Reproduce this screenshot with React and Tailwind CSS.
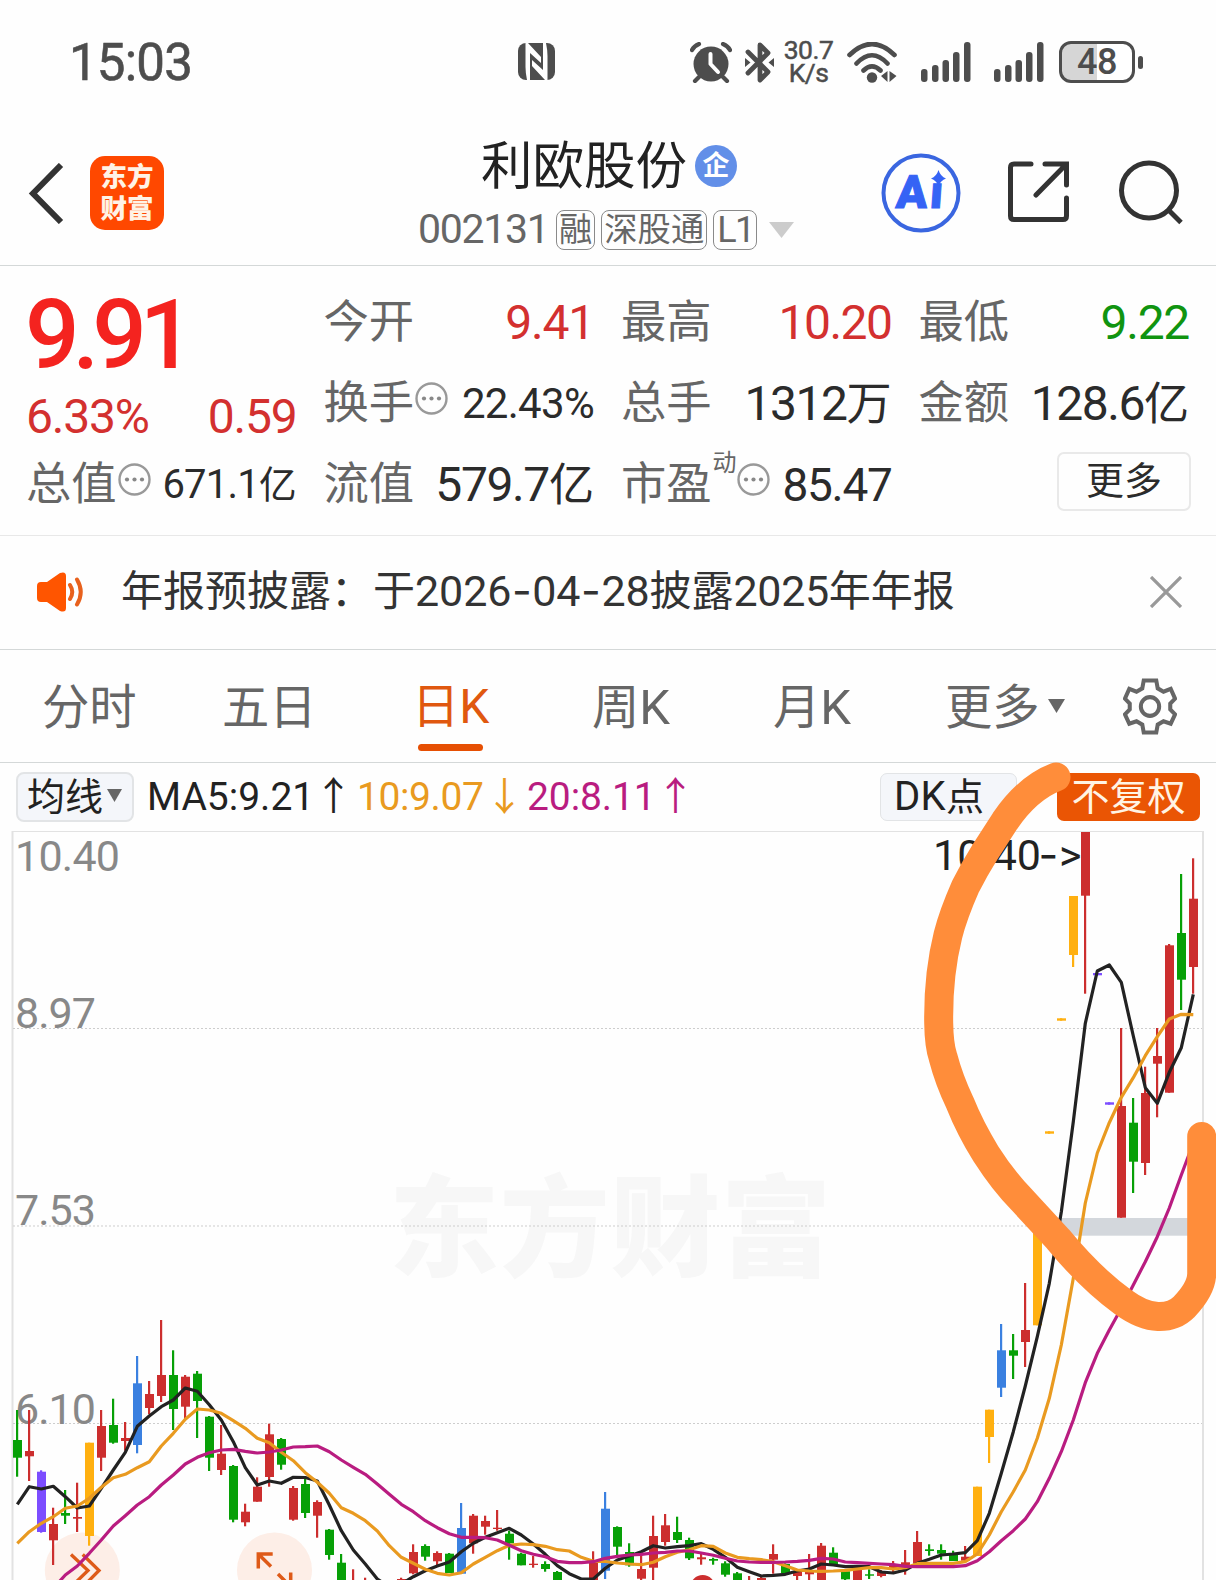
import React from 'react';
import clsx from 'clsx';

const RED = '#cc2e2e';
const GREEN = '#07a007';
const YELLOW = '#ffb010';
const BLUE = '#3a80e0';
const PURPLE = '#7c4dff';

// slot, color, high, body top, body bottom, low (screen pixels)
const CANDLES = [
    [0, GREEN, 1410, 1440, 1457.7, 1476.7],
    [1, RED, 1410, 1451, 1456.3, 1481],
    [2, PURPLE, 1470.3, 1471.7, 1532, 1532.7],
    [3, RED, 1507.7, 1524, 1540.3, 1565],
    [4, GREEN, 1490, 1513, 1515.7, 1524],
    [5, RED, 1482.7, 1517, 1518.7, 1532],
    [6, YELLOW, 1442.7, 1442.7, 1536, 1545.7],
    [7, RED, 1410, 1426, 1457.7, 1471],
    [8, GREEN, 1398.7, 1425, 1442.7, 1443.7],
    [9, RED, 1422, 1438, 1441, 1450.7],
    [10, BLUE, 1356, 1383.3, 1445, 1453.3],
    [11, RED, 1381, 1394, 1408, 1414.3],
    [12, RED, 1320, 1375, 1396, 1402],
    [13, GREEN, 1350.3, 1375, 1409, 1430],
    [14, RED, 1375, 1376.7, 1406.7, 1419.3],
    [15, GREEN, 1371, 1373.7, 1401, 1438],
    [16, GREEN, 1416, 1416.7, 1457.7, 1471],
    [17, RED, 1425, 1453.7, 1470, 1475],
    [18, GREEN, 1465, 1466, 1519.7, 1522.3],
    [19, RED, 1503.7, 1511.7, 1522.3, 1526.3],
    [20, RED, 1477.3, 1486.7, 1501.7, 1501.7],
    [21, RED, 1423.7, 1434.3, 1477, 1486.7],
    [22, GREEN, 1438, 1439, 1464.7, 1469.7],
    [23, RED, 1486, 1488, 1519.7, 1520.7],
    [24, GREEN, 1478, 1484, 1513, 1518],
    [25, RED, 1500.3, 1502, 1515.7, 1537.7],
    [26, GREEN, 1529, 1529.7, 1555, 1559.7],
    [27, GREEN, 1554, 1562.7, 1590, 1590],
    [28, RED, 1569.3, 1580, 1590, 1590],
    [29, RED, 1577.7, 1584, 1590, 1590],
    [32, RED, 1577.7, 1579, 1600, 1600],
    [33, RED, 1544.3, 1552, 1573.3, 1574.3],
    [34, GREEN, 1544.3, 1546, 1556.7, 1560.7],
    [35, RED, 1551.3, 1553, 1561.3, 1565.3],
    [36, GREEN, 1553, 1553.7, 1573, 1573],
    [37, BLUE, 1503, 1528, 1573.7, 1573.7],
    [38, RED, 1514, 1515.7, 1543.3, 1553.7],
    [39, RED, 1515.7, 1521, 1526.7, 1534.7],
    [40, RED, 1510, 1527.7, 1529, 1530.7],
    [41, GREEN, 1530.7, 1533.7, 1543.3, 1559.7],
    [42, GREEN, 1552.7, 1553.7, 1565.3, 1565.3],
    [43, RED, 1556, 1563.7, 1565, 1567.7],
    [44, GREEN, 1561.3, 1564, 1569, 1571.7],
    [45, GREEN, 1571, 1572, 1590, 1590],
    [48, RED, 1551.3, 1561.7, 1590, 1590],
    [49, BLUE, 1492, 1508.7, 1570.7, 1579],
    [50, GREEN, 1526.3, 1527, 1546.7, 1555],
    [51, GREEN, 1543.3, 1552, 1565.3, 1566.7],
    [52, RED, 1555, 1569, 1578.7, 1580],
    [53, RED, 1515.7, 1536, 1567.7, 1580],
    [54, RED, 1514, 1525.3, 1542, 1545.7],
    [55, GREEN, 1516.7, 1532, 1540, 1543],
    [56, GREEN, 1537.7, 1540, 1558.3, 1560],
    [57, RED, 1554, 1557.3, 1559.3, 1564.7],
    [58, GREEN, 1557.7, 1559, 1560.7, 1564.7],
    [59, GREEN, 1561.3, 1563.3, 1574.7, 1576.7],
    [60, GREEN, 1572, 1573.3, 1590, 1590],
    [61, RED, 1576, 1583, 1590, 1590],
    [62, RED, 1577, 1578, 1590, 1590],
    [63, RED, 1544.3, 1554, 1559.7, 1573.7],
    [64, GREEN, 1563.3, 1564, 1573, 1573],
    [65, RED, 1570, 1571.7, 1576, 1580],
    [66, RED, 1554, 1570.7, 1574.3, 1580],
    [67, RED, 1543, 1545.7, 1590, 1590],
    [68, GREEN, 1547.3, 1552.7, 1564, 1564],
    [69, GREEN, 1571, 1571.3, 1579.3, 1580],
    [70, RED, 1570, 1570, 1590, 1590],
    [71, GREEN, 1569.3, 1574.3, 1575.7, 1579],
    [72, RED, 1570, 1571.7, 1576, 1577.3],
    [73, RED, 1561, 1566, 1569, 1573],
    [74, RED, 1550, 1562.3, 1568.3, 1574.7],
    [75, RED, 1531, 1542, 1563.3, 1563.3],
    [76, GREEN, 1544.3, 1549.3, 1551, 1555.7],
    [77, GREEN, 1544.3, 1550, 1553.7, 1559.7],
    [78, GREEN, 1550.7, 1554.3, 1561, 1561],
    [79, RED, 1546, 1556.7, 1560.7, 1562],
    [80, YELLOW, 1486.7, 1486.7, 1556, 1556],
    [81, YELLOW, 1409.7, 1409.7, 1437, 1463],
    [82, BLUE, 1324, 1350.3, 1387.7, 1397],
    [83, GREEN, 1334, 1350.3, 1355.7, 1379],
    [84, RED, 1283, 1330, 1342, 1367],
    [85, YELLOW, 1226, 1226, 1325.3, 1325.3],
    [86, YELLOW, 1131.3, 1131.3, 1133.7, 1133.7],
    [87, YELLOW, 1018.3, 1018.3, 1020.7, 1020.7],
    [88, YELLOW, 896, 896, 955, 967],
    [89, RED, 832, 832, 895.7, 993.7],
    [90, PURPLE, 973, 973, 975.3, 975.3],
    [91, PURPLE, 1102.3, 1102.3, 1104.7, 1104.7],
    [92, RED, 1028, 1106, 1217.7, 1217.7],
    [93, GREEN, 1098, 1122.7, 1161.7, 1193],
    [94, RED, 1066.7, 1093, 1163, 1175],
    [95, RED, 1028, 1056, 1063.7, 1117.3],
    [96, RED, 944, 945.3, 1092.7, 1092.7],
    [97, GREEN, 874, 933, 979.7, 1010],
    [98, RED, 858.3, 898.7, 967, 993.7],
];

// one y per slot, starting at slot 0
const MA5 = [
    1504.3, 1486.7, 1489, 1486.3, 1496.7, 1508, 1506, 1488.3, 1470, 1452.3, 1426.3, 1416, 1406.7, 1400, 1388, 1391.3,
    1404.7, 1420, 1441.7, 1467.7, 1485, 1481, 1483.3, 1477.3, 1477.5, 1481, 1505, 1530.7, 1550, 1564, 1579, 1587,
    1584, 1576.7, 1570.7, 1566, 1562, 1551.7, 1543.3, 1537.3, 1532.7, 1528.3, 1535, 1544, 1554.3, 1565.7, 1573.7, 1579,
    1579, 1568.3, 1560, 1556, 1551.7, 1545.7, 1548, 1546.7, 1545.7, 1543.7, 1549.3, 1557.3, 1567.3, 1571.7, 1576, 1575.3,
    1574.3, 1571, 1569, 1564, 1565, 1566.7, 1566.3, 1566.7, 1572, 1573, 1570, 1563.3, 1559.3, 1555, 1554, 1552.7,
    1540.7, 1513.3, 1473.3, 1431.7, 1386, 1336.7, 1283.3, 1212, 1121.7, 1023.3, 971, 965, 982.3, 1036, 1087.7, 1103.3,
    1072.3, 1047.7, 994.3,
];

const MA10 = [
    1543.3, 1531.7, 1523.3, 1516.7, 1508.3, 1506, 1498.3, 1487.3, 1477.7, 1474.3, 1467.7, 1461.7, 1446, 1433.3, 1419.3, 1409,
    1410, 1413.3, 1420.7, 1428.3, 1438.3, 1442.7, 1452.3, 1460.7, 1472.7, 1482.3, 1493.3, 1507.7, 1513.3, 1520.7, 1531, 1545.7,
    1557.3, 1563.3, 1569.3, 1573.3, 1575, 1572.7, 1564, 1557.3, 1550.7, 1545.3, 1544, 1544.7, 1546.3, 1549.7, 1551, 1557.3,
    1561.3, 1561.5, 1563, 1564, 1564.7, 1562.3, 1556.7, 1552.3, 1549.7, 1545.7, 1546.3, 1553, 1557.3, 1558.7, 1559.7, 1561.7,
    1565.7, 1570, 1571, 1571.3, 1571, 1570.3, 1569, 1567.7, 1567.7, 1569, 1567.7, 1563.7, 1563.3, 1563.3, 1563.3, 1561.7,
    1554, 1535, 1511.7, 1491.7, 1470, 1438.3, 1398.3, 1345, 1278.3, 1203, 1153, 1122.7, 1097.3, 1077.7, 1055.7, 1036.7,
    1019, 1014.3, 1014.7,
];

const MA20 = [
    1636, 1621, 1604, 1588.3, 1575, 1566, 1553.3, 1540, 1526, 1515.7, 1505, 1496.7, 1485, 1475, 1464, 1457.3,
    1452.7, 1450, 1449.3, 1451.3, 1453, 1452, 1450, 1447, 1446.7, 1446, 1451.7, 1460, 1467.3, 1474.3, 1484, 1494.3,
    1504.3, 1511.7, 1520.7, 1527.7, 1533.7, 1537.3, 1537.3, 1537.7, 1540, 1545.3, 1550.7, 1554.3, 1556.7, 1561.3, 1562.7, 1562.7,
    1561.7, 1558.3, 1556.3, 1555, 1554.3, 1553, 1552.3, 1551, 1551, 1553, 1555.3, 1558.3, 1561, 1562, 1562.3, 1562.3,
    1562, 1561.3, 1560.3, 1558.3, 1559, 1562, 1562.7, 1563.3, 1564, 1564.7, 1566.3, 1566.7, 1566.7, 1566.7, 1566.7, 1565.7,
    1560.7, 1551.7, 1540.7, 1530.7, 1519, 1501.7, 1478.3, 1451.7, 1420, 1382.7, 1353.3, 1330, 1308.3, 1285, 1261.7, 1236.7,
    1208, 1175, 1143,
];

const slotX = (i) => 17.3 + i * 12;
const toPoints = (values) => values.map((y, i) => `${slotX(i)},${y}`).join(' ');

const AXIS = [
    { label: '10.40', y: 871, width: 105 },
    { label: '8.97', y: 1028, width: 81 },
    { label: '7.53', y: 1225, width: 81 },
    { label: '6.10', y: 1424, width: 81 },
];

const Signal = ({ className }) => (
    <svg className={className} width="50" height="40" viewBox="0 0 50 40" fill="#4d4d4d">
        <rect x="0" y="27" width="6.5" height="13" rx="3" />
        <rect x="11" y="23" width="6.5" height="17" rx="3" />
        <rect x="21.5" y="18" width="6.5" height="22" rx="3" />
        <rect x="32" y="10" width="6.5" height="30" rx="3" />
        <rect x="43" y="0" width="6.5" height="40" rx="3" />
    </svg>
);

const StatusBar = () => (
    <div className="h-[124px] flex items-center text-[#4d4d4d]">
        <span className="ml-[69px] w-[449px] text-[51px] leading-none tracking-[-0.8px] font-normal [-webkit-text-stroke:0.6px_#4d4d4d]">15:03</span>
        <svg className="-mt-[2px]" width="37" height="37" viewBox="0 0 37 37">
            <rect width="37" height="37" rx="8" fill="#4d4d4d" />
            <path d="M7.500 0 H10 L23 14 V20 L12 10 V37 H9 Q7.500 30 7.500 24 Z M29.500 37 H27 L14 23 V17 L25 27 V0 H28 Q29.500 7 29.500 13 Z" fill="#fff" />
        </svg>
        <svg className="ml-[135px]" width="42" height="41" viewBox="0 0 42 41">
            <circle cx="21" cy="22" r="17.5" fill="#4d4d4d" />
            <path d="M2 8 Q4 4 9 2 M33 2 Q38 4 40 8 M9 35 L5 39 M33 35 L37 39" fill="none" stroke="#4d4d4d" strokeWidth="4.2" strokeLinecap="round" />
            <path d="M20.5 12 V22 L28 30" fill="none" stroke="#fff" strokeWidth="4" strokeLinecap="round" strokeLinejoin="round" />
        </svg>
        <svg className="ml-[13px]" width="29" height="41" viewBox="0 0 29 41">
            <path d="M3 10 L23 30 L15 38 V3 L23 11 L3 31" fill="none" stroke="#4d4d4d" strokeWidth="4.8" strokeLinejoin="round" strokeLinecap="round" />
            <path d="M0 16 L5.5 20.5 L0 25 Z M29 16 L23.5 20.5 L29 25 Z" fill="#4d4d4d" />
        </svg>
        <div className="ml-[6px] -mt-[2px] w-[57px] text-center text-[26.5px] leading-[23.5px] tracking-[-0.5px] [-webkit-text-stroke:0.5px_#4d4d4d]">
            <div>30.7</div>
            <div>K/s</div>
        </div>
        <svg className="ml-[10px]" width="50" height="41" viewBox="0 0 50 41">
            <path d="M2.5 13 Q25 -9 47.5 13 M9.5 21.500 Q25 5 40.500 21.500 M16.500 28.500 Q25 20 33.500 28.500" fill="none" stroke="#4d4d4d" strokeWidth="4.6" strokeLinecap="round" />
            <circle cx="25" cy="35.500" r="5.2" fill="#4d4d4d" />
            <path d="M40.500 29 V40 L34 34 Z M42.500 29 L49.500 34 L42.500 40 Z" fill="#4d4d4d" />
        </svg>
        <Signal className="ml-[24px]" />
        <Signal className="ml-[23px]" />
        <div className="ml-[15px] w-[76px] h-[42px] -mt-px rounded-[12px] border-[3.5px] border-[#4d4d4d] bg-linear-to-r from-[#d6d6d6] from-50% to-white to-50% flex items-center justify-center text-[36px] leading-none tracking-[-0.5px] font-medium">48</div>
        <div className="ml-[3px] w-[5px] h-[13px] rounded-full bg-[#4d4d4d]" />
    </div>
);

const Tag = ({ children }) => (
    <span className="h-[40px] px-[2px] border-[1.5px] border-[#8a8a8a] rounded-[8px] flex items-center text-[33.3px] leading-none whitespace-nowrap shrink-0">{children}</span>
);

const Header = () => (
    <div className="h-[142px] border-b border-[#d4d8d8] flex items-start">
        <svg className="ml-[28px] mt-[39px]" width="37" height="61" viewBox="0 0 37 61">
            <path d="M33 2 L5 30.5 L33 59" fill="none" stroke="#333" strokeWidth="6" />
        </svg>
        <div className="ml-[25px] mt-[32px] w-[74px] h-[74px] rounded-[15px] bg-[#ff4800] text-[#fff3e6] text-[26.5px] leading-[31.5px] font-black text-center pt-[5px]">
            <div>东方</div>
            <div>财富</div>
        </div>
        <div className="ml-[254px] w-[396px]">
            <div className="mt-[12px] h-[62px] ml-[63px] flex items-center">
                <span className="text-[51.5px] leading-none text-[#222]">利欧股份</span>
                <span className="ml-[8px] -mt-[2px] size-[42px] rounded-full bg-[#628fe8] text-white text-[27px] leading-none font-bold flex items-center justify-center">企</span>
            </div>
            <div className="mt-[11px] flex items-center text-[#666]">
                <span className="w-[138px] shrink-0 text-[41px] leading-none tracking-[-1.3px]">002131</span>
                <Tag>融</Tag>
                <span className="w-[6px] shrink-0" />
                <Tag>深股通</Tag>
                <span className="w-[6px] shrink-0" />
                <Tag><span className="pl-px text-[36px] tracking-[-1.5px]">L1</span></Tag>
                <svg className="ml-[12px] shrink-0" width="25" height="16" viewBox="0 0 25 16"><path d="M0 0 H25 L12.5 16 Z" fill="#ccc" /></svg>
            </div>
        </div>
        <svg className="ml-[67px] mt-[29px]" width="80" height="80" viewBox="0 0 80 80">
            <circle cx="40" cy="40" r="37.5" fill="none" stroke="#3a66e0" strokeWidth="4" />
            <g transform="skewX(-4)">
                <text y="55" fontSize="46" fontWeight="900" fill="#3563f5" stroke="#3563f5" strokeWidth="1"><tspan x="18">A</tspan><tspan x="52">i</tspan></text>
            </g>
            <rect x="49" y="16" width="15" height="14" fill="#fefefe" />
            <path d="M57.500 17 Q59.500 23.500 65 25.500 Q59.500 27.500 57.500 33 Q55.500 27.500 50 25.500 Q55.500 23.500 57.500 17 Z" fill="#3563f5" />
        </svg>
        <svg className="ml-[45px] mt-[36px]" width="64" height="64" viewBox="0 0 64 64">
            <path d="M25 4 H8 Q4.500 4 4.500 7.500 V56 Q4.500 59.500 8 59.500 H57 Q60.500 59.500 60.500 56 V38 M39 4 H60.500 V25 M60 4.500 L30 35" fill="none" stroke="#333" strokeWidth="5" strokeLinecap="round" />
        </svg>
        <svg className="ml-[48px] mt-[35px]" width="68" height="68" viewBox="0 0 68 68">
            <circle cx="31" cy="31.500" r="27.500" fill="none" stroke="#333" strokeWidth="5" />
            <path d="M50 50.500 L63 63.500" stroke="#333" strokeWidth="5" />
        </svg>
    </div>
);

const Dots = () => (
    <svg className="-mt-[10px] ml-px shrink-0" width="33" height="33" viewBox="0 0 33 33">
        <circle cx="16.5" cy="16.5" r="15" fill="none" stroke="#999" strokeWidth="2.4" />
        <g fill="#888">
            <circle cx="9" cy="16.5" r="2.1" />
            <circle cx="16.5" cy="16.5" r="2.1" />
            <circle cx="24" cy="16.5" r="2.1" />
        </g>
    </svg>
);

const Quote = ({ label, note, dots, value, unit, size = 'text-[48px]', color = 'text-[#2b2b2b]' }) => (
    <div className="h-[81px] pt-[6px] flex items-center">
        <span className="text-[45.3px] leading-none text-[#666] -ml-px">{label}</span>
        {note && <span className="-mt-[43px] ml-px -mr-px text-[24px] leading-none text-[#666]">{note}</span>}
        {dots && <Dots />}
        <span className={clsx('ml-auto flex items-baseline leading-none', size, color)}>
            {value}
            {unit && <span className="text-[0.94em] tracking-normal">{unit}</span>}
        </span>
    </div>
);

const QuotePanel = () => (
    <div className="h-[270px] border-b border-[#e8e8e8] px-[27px] pt-[13px] grid grid-cols-4 gap-x-[28px] content-start">
        <div>
            <div className="h-[108px] -ml-[2px] flex items-center text-[96px] leading-none font-medium tracking-[-7px] text-[#f4231f] pt-[3px]">9.91</div>
            <div className="h-[54px] -ml-px pt-[5px] flex items-center justify-between text-[48px] leading-none tracking-[-1.2px] text-[#d3302f]">
                <span>6.33%</span>
                <span>0.59</span>
            </div>
            <Quote label="总值" dots value="671.1" unit="亿" size="text-[40px] tracking-[-0.8px]" />
        </div>
        <div>
            <Quote label="今开" value="9.41" size="text-[48px] tracking-[-1.2px]" color="text-[#d3302f]" />
            <Quote label="换手" dots value="22.43%" size="text-[42px] tracking-[-0.7px]" />
            <Quote label="流值" value="579.7" unit="亿" size="text-[48px] tracking-[-1.4px]" />
        </div>
        <div>
            <Quote label="最高" value="10.20" size="text-[48px] tracking-[-1.5px]" color="text-[#d3302f]" />
            <Quote label="总手" value="1312" unit="万" size="text-[48px] tracking-[-1.5px]" />
            <Quote label="市盈" note="动" dots value="85.47" size="text-[46px] tracking-[-1.3px]" />
        </div>
        <div>
            <Quote label="最低" value="9.22" size="text-[48px] tracking-[-1.3px]" color="text-[#109410]" />
            <Quote label="金额" value="128.6" unit="亿" size="text-[48px] tracking-[-1.5px]" />
            <div className="h-[81px] flex items-center justify-end">
                <div className="w-[134px] h-[59px] -mr-[2px] pb-[2px] rounded-[7px] border-2 border-[#e9e9e9] flex items-center justify-center text-[38px] leading-none text-[#2b2b2b]">更多</div>
            </div>
        </div>
    </div>
);

// the UI face draws a wide hyphen
const Dash = () => <span className="inline-block w-[21px] text-center tracking-normal font-[Inter]">-</span>;

const Notice = () => (
    <div className="h-[114px] border-b border-[#d4d8d8] flex items-center text-[#333]">
        <svg className="ml-[37px] -mt-[2px]" width="48" height="40" viewBox="0 0 48 40">
            <path d="M4 10 H10 L23 1 Q29 -1 29 4 V36 Q29 41 23 39 L10 30 H4 Q0 30 0 26 V14 Q0 10 4 10 Z" fill="#ff5500" />
            <path d="M33 13 Q37.500 20 33 27 M40 7.500 Q47.500 20 40 32.500" fill="none" stroke="#e8611d" strokeWidth="4" strokeLinecap="round" />
        </svg>
        <div className="ml-[36px] -mt-[3px] flex items-baseline text-[42px] leading-none whitespace-nowrap">
            年报预披露：于
            <span className="text-[43px] tracking-[-0.1px]">2026<Dash />04<Dash />28</span>
            披露
            <span className="text-[43px] tracking-[-0.4px]">2025</span>
            年年报
        </div>
        <svg className="ml-auto mr-[34px] -mt-[2px]" width="32" height="32" viewBox="0 0 32 32">
            <path d="M1 1 L31 31 M31 1 L1 31" stroke="#999" strokeWidth="3.3" />
        </svg>
    </div>
);

const Tabs = () => (
    <div className="h-[113px] border-b border-[#d4d8d8] flex items-center text-[47.3px] leading-none text-[#666]">
        <span className="ml-[42px] pt-[5px] w-[180px]">分时</span>
        <span className="pt-[5px] w-[190px]">五日</span>
        <span className="relative pt-[3px] w-[180px] text-[#e0580f]">
            日<span className="text-[48px]">K</span>
            <span className="absolute left-[6px] top-[64px] w-[65px] h-[7px] rounded-full bg-[#e64f03]" />
        </span>
        <span className="pt-[3px] w-[181px]">周<span className="text-[49px]">K</span></span>
        <span className="pt-[3px] w-[172px]">月<span className="text-[49px]">K</span></span>
        <span className="pt-[5px]">更多</span>
        <svg className="ml-[8px]" width="17" height="14" viewBox="0 0 17 14"><path d="M0 0 H17 L8.500 14 Z" fill="#666" /></svg>
        <svg className="ml-[58px]" width="54" height="57" viewBox="0 0 56 58" preserveAspectRatio="none">
            <path d="M21.500 2.500 H34.500 L36 10.500 L42 14 L49.500 11 L54 21 L49 26 V32 L54 37 L49.500 46.500 L42 44 L36 47.500 L34.500 55.500 H21.500 L20 47.500 L14 44 L6.500 46.500 L2 37 L7 32 V26 L2 21 L6.500 11 L14 14 L20 10.500 Z" fill="none" stroke="#666" strokeWidth="4.2" />
            <circle cx="28" cy="29" r="9.500" fill="none" stroke="#666" strokeWidth="4.2" />
        </svg>
    </div>
);

const MaBar = () => (
    <div className="h-[68px] pt-[9px] flex items-start leading-none">
        <div className="ml-[16px] w-[118px] h-[50px] rounded-[8px] border-2 border-[#e2e4e6] bg-[#f4f6fa] flex items-center pl-[9px] text-[38px] text-[#222]">
            均线
            <svg className="ml-[4px] -mt-[3px]" width="15" height="13" viewBox="0 0 15 13"><path d="M0 0 H15 L7.500 13 Z" fill="#666" /></svg>
        </div>
        <div className="h-[50px] ml-[13px] flex items-center text-[39px]">
            <span className="w-[167px] text-[#222]">MA5:9.21</span>
            <span className="w-[43px] text-[#222]">↑</span>
            <span className="w-[128px] text-[#e99a20] tracking-[-0.4px]">10:9.07</span>
            <span className="w-[42px] text-[#e99a20]">↓</span>
            <span className="w-[129px] text-[#b91c80] tracking-[-0.1px]">20:8.11</span>
            <span className="text-[#b91c80]">↑</span>
        </div>
        <div className="ml-auto mt-px w-[137px] h-[48px] rounded-[7px] border border-[#e2e4e6] bg-[#f4f6fa] pl-[13px] flex items-center text-[38px] text-[#222]"><span className="text-[40px] tracking-[0.3px]">DK</span>点</div>
        <div className="ml-[40px] mr-[16px] mt-px w-[143px] h-[48px] rounded-[7px] bg-[#ea5504] flex items-center justify-center text-[38px] text-[#fff4e4]">不复权</div>
    </div>
);

const Chart = () => (
    <svg className="block" width="1216" height="749" viewBox="0 831 1216 749">
        <text x="389" y="1268" fontSize="110" fontWeight="900" fill="#f7f7f7" textLength="442">东方财富</text>
        <path d="M12.500 1580 V831 H1203 V1580" fill="none" stroke="#e2e2e2" strokeWidth="2" />
        <path d="M13 1028.500 H1202 M13 1226 H1202 M13 1423.500 H1202" stroke="#cdcdcd" strokeWidth="1" strokeDasharray="2 2" />
        <rect x="1050" y="1218" width="150" height="17.700" fill="#d3d7dc" />

        {/* floating buttons */}
        <circle cx="82.300" cy="1570" r="37.500" fill="#fdeee7" />
        <path d="M71 1554.500 L88 1570.500 L71 1587 M82.700 1554.500 L99 1570.500 L82.700 1587" fill="none" stroke="#de5a18" strokeWidth="3.300" />
        <circle cx="274.500" cy="1570" r="37.500" fill="#fdeee7" />
        <path d="M272.700 1554 H258.300 V1568.500 M258.300 1554 L271 1566.500 M278 1574 L291 1587 M290.700 1572.500 V1587" fill="none" stroke="#de5a18" strokeWidth="3.500" />

        {AXIS.map((a) => (
            <text key={a.label} x="15" y={a.y} fontSize="43" fill="#888" textLength={a.width}>{a.label}</text>
        ))}

        {CANDLES.map(([i, color, high, top, bottom, low]) => (
            <g key={i} fill={color}>
                <rect x={slotX(i) - 1.3} y={high} width="2.2" height={low - high} />
                <rect x={slotX(i) - 4.3} y={top} width="9" height={bottom - top} />
            </g>
        ))}

        <g fill="none" strokeWidth="3.2" strokeLinejoin="round">
            <polyline points={toPoints(MA5)} stroke="#222" />
            <polyline points={toPoints(MA10)} stroke="#e99a20" />
            <polyline points={toPoints(MA20)} stroke="#b91c80" />
        </g>
        <circle cx="702.700" cy="1587.500" r="12.500" fill={RED} />
        <text y="870" fontSize="43" fill="#222">
            <tspan x="933">10.40</tspan>
            <tspan x="1038.500" fontFamily="Inter">-</tspan>
            <tspan x="1059">&gt;</tspan>
        </text>
    </svg>
);

// freehand marker stroke laid over the chart
const Marker = () => (
    <svg className="absolute left-0 top-0" width="1216" height="1580" viewBox="0 0 1216 1580">
        <path
            d="M1056 777 C1035 785 1018 802 1005 821 L985 852 Q975 868 965.500 886.500 Q953 915 948 935 Q938 975 938.700 1023 Q939 1045 943 1057 Q949 1080 960 1103 Q970 1128 986 1154 Q1004 1182 1022 1200 L1058 1239 Q1090 1278 1123 1302 Q1142 1316 1158 1316.500 Q1174 1317 1184 1307 Q1202 1288 1201.700 1273 V1136.500"
            fill="none"
            stroke="#ff8d3a"
            strokeWidth="29"
            strokeLinecap="round"
            strokeLinejoin="round"
        />
    </svg>
);

const App = () => (
    <div className="relative w-[1216px] h-[1580px] overflow-hidden bg-[#fefefe] font-[Roboto,'Noto_Sans_CJK_SC',sans-serif]">
        <StatusBar />
        <Header />
        <QuotePanel />
        <Notice />
        <Tabs />
        <MaBar />
        <Chart />
        <Marker />
    </div>
);

export default App;
